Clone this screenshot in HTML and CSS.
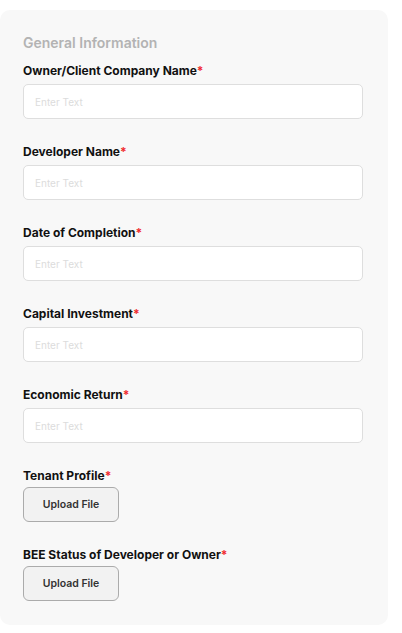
FILE: index.html
```html
<!DOCTYPE html>
<html lang="en">
<head>
<meta charset="utf-8">
<title>General Information</title>
<link rel="stylesheet" href="styles.css">
</head>
<body>
<section class="card">
  <h2 class="title">General Information</h2>
  <div class="field">
    <label class="label">Owner/Client Company Name<span class="req">*</span></label>
    <input class="input" type="text" placeholder="Enter Text">
  </div>
  <div class="field">
    <label class="label">Developer Name<span class="req">*</span></label>
    <input class="input" type="text" placeholder="Enter Text">
  </div>
  <div class="field">
    <label class="label">Date of Completion<span class="req">*</span></label>
    <input class="input" type="text" placeholder="Enter Text">
  </div>
  <div class="field">
    <label class="label">Capital Investment<span class="req">*</span></label>
    <input class="input" type="text" placeholder="Enter Text">
  </div>
  <div class="field">
    <label class="label">Economic Return<span class="req">*</span></label>
    <input class="input" type="text" placeholder="Enter Text">
  </div>
  <div class="field upload-field">
    <label class="label">Tenant Profile<span class="req">*</span></label>
    <button class="upload" type="button">Upload File</button>
  </div>
  <div class="field upload-field">
    <label class="label">BEE Status of Developer or Owner<span class="req">*</span></label>
    <button class="upload" type="button">Upload File</button>
  </div>
</section>
</body>
</html>
```
FILE: styles.css
```css
* { box-sizing: border-box; }
html, body { margin: 0; padding: 0; background: #ffffff; }
body {
  font-family: Inter, "Noto Sans", "Liberation Sans", sans-serif;
  padding-top: 10px;
}
.card {
  width: 388px;
  background: #f8f8f8;
  border-radius: 10px;
  padding: 24px 23px 24px 23px;
  display: flex;
  flex-direction: column;
}
.title {
  margin: 0 0 12px 0;
  font-size: 14px;
  line-height: 17px;
  font-weight: 600;
  color: #b3b3b3;
}
.field {
  display: flex;
  flex-direction: column;
  gap: 5px;
  margin-bottom: 25px;
}
.field:last-child { margin-bottom: 0; }
.upload-field { gap: 3px; }
.label {
  font-size: 12px;
  line-height: 16px;
  font-weight: 700;
  color: #111111;
}
.req { color: #f0282d; }
.input {
  width: 340px;
  height: 35px;
  border: 1px solid #dedede;
  border-radius: 5px;
  background: #ffffff;
  padding: 0 11px;
  font-family: inherit;
  font-size: 10px;
  color: #333;
  outline: none;
}
.input::placeholder { color: #dcdcdc; }
.upload {
  width: 96px;
  height: 35px;
  border: 1px solid #ababab;
  border-radius: 6px;
  background: #f2f2f2;
  font-family: inherit;
  font-size: 10.5px;
  font-weight: 600;
  color: #333333;
  padding: 0;
  cursor: pointer;
}
```
